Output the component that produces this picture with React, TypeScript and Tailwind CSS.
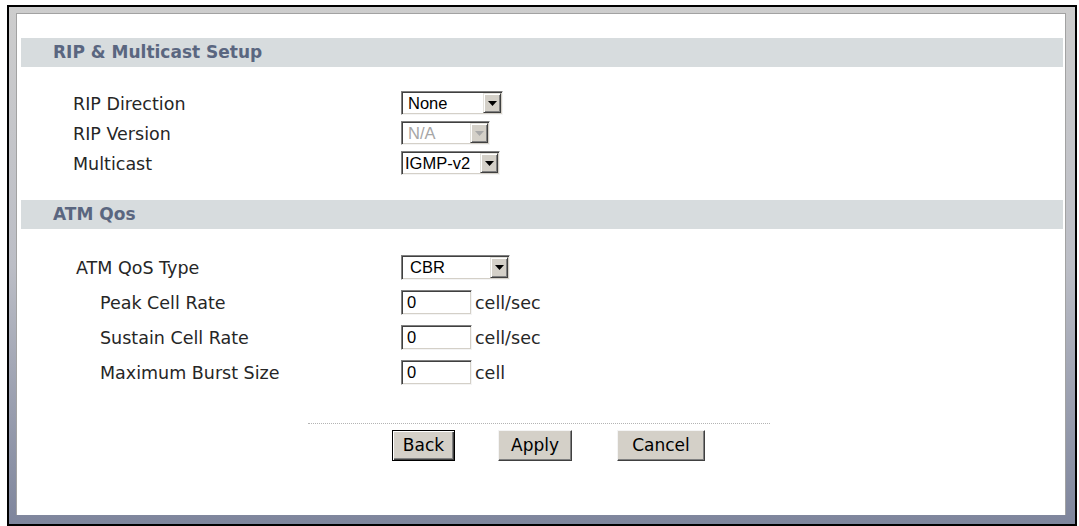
import React from "react";

const LABEL = "font-['DejaVu_Sans',Verdana,sans-serif] text-[17.5px] leading-none text-[#262626]";
const CTRL = "font-['Liberation_Sans',Arial,sans-serif] text-[16.5px] leading-none";

function Arrow({ disabled }: { disabled?: boolean }) {
  return (
    <div className="flex h-full w-[18px] items-center justify-center border border-t-[#e4e2dc] border-l-[#e4e2dc] border-b-[#404040] border-r-[#404040] bg-[#d4d0c8] shadow-[inset_1px_1px_0_#ffffff,inset_-1px_-1px_0_#808080]">
      <svg width="9" height="5" viewBox="0 0 9 5">
        <path d="M0 0H9L4.5 5Z" fill={disabled ? "#a8a8a8" : "#000"} />
      </svg>
    </div>
  );
}

function Select({ value, className, disabled, pad }: { value: string; className: string; disabled?: boolean; pad?: string }) {
  return (
    <div
      className={`flex items-stretch border border-t-[#808080] border-l-[#808080] border-b-[#f4f4f4] border-r-[#f4f4f4] bg-white p-[1px] shadow-[inset_1px_1px_0_#404040,inset_-1px_-1px_0_#d4d0c8] ${className}`}
    >
      <div className={`flex flex-1 items-center ${pad ?? "pl-[5px]"} ${CTRL} ${disabled ? "text-[#a6a6a6]" : "text-black"}`}>{value}</div>
      <Arrow disabled={disabled} />
    </div>
  );
}

function TextInput({ value }: { value: string }) {
  return (
    <div className={`flex h-[25px] w-[71px] items-center border border-t-[#808080] border-l-[#808080] border-b-[#f4f4f4] border-r-[#f4f4f4] bg-white pl-[5px] shadow-[inset_1px_1px_0_#404040,inset_-1px_-1px_0_#d4d0c8] ${CTRL} text-black`}>
      {value}
    </div>
  );
}

function Header({ title }: { title: string }) {
  return (
    <div className="flex h-[29px] items-center bg-[#d7dcde] pl-[32px]">
      <span className="font-['DejaVu_Sans',Verdana,sans-serif] text-[17px] font-bold leading-none text-[#5a6680]">{title}</span>
    </div>
  );
}

function Row({ label, h, indent, children }: { label: string; h: string; indent: string; children: React.ReactNode }) {
  return (
    <div className={`flex items-center ${h}`}>
      <div className={`w-[380px] pl-[52px] pt-[3px] ${LABEL}`}>
        <span className={indent}>{label}</span>
      </div>
      <div className="flex items-center">{children}</div>
    </div>
  );
}

function Btn({ label, className, primary }: { label: string; className: string; primary?: boolean }) {
  return (
    <div
      className={`flex h-[31px] items-center justify-center bg-[#d4d0c8] font-['DejaVu_Sans',Verdana,sans-serif] text-[17px] leading-none text-black ${
        primary
          ? "border border-black shadow-[inset_1px_1px_0_#ffffff,inset_-1px_-1px_0_#404040,inset_-2px_-2px_0_#808080]"
          : "border border-t-[#f4f4f4] border-l-[#f4f4f4] border-b-[#404040] border-r-[#404040] shadow-[inset_-1px_-1px_0_#808080]"
      } ${className}`}
    >
      {label}
    </div>
  );
}

export default function App() {
  return (
    <div className="flex h-[526px] w-[1079px] flex-col bg-white pl-[7px] pr-[2px] pt-[5px]">
      <div className="flex flex-1 flex-col border-2 border-black">
        <div className="flex flex-1 flex-col bg-gradient-to-b from-[#cdcdcd] via-[#bcbec6] to-[#7e859c] pb-[9px] pl-[7px] pr-[9px] pt-[6px]">
          <div className="flex flex-1 flex-col border-l border-t border-r border-[#a2a2a2] bg-white pl-[4px] pr-[2px] pt-[24px]">
            <Header title="RIP & Multicast Setup" />
            <div className="mt-[21px] flex flex-col">
              <Row label="RIP Direction" h="h-[30px]" indent="">
                <Select value="None" className="h-[24px] w-[102px]" />
              </Row>
              <Row label="RIP Version" h="h-[30px]" indent="">
                <Select value="N/A" className="h-[24px] w-[89px]" disabled />
              </Row>
              <Row label="Multicast" h="h-[30px]" indent="">
                <Select value="IGMP-v2" className="h-[24px] w-[99px]" pad="pl-[2px]" />
              </Row>
            </div>
            <div className="mt-[22px]">
              <Header title="ATM Qos" />
            </div>
            <div className="mt-[21px] flex flex-col">
              <Row label="ATM QoS Type" h="h-[35px]" indent="pl-[3px]">
                <Select value="CBR" className="h-[25px] w-[109px]" pad="pl-[7px]" />
              </Row>
              <Row label="Peak Cell Rate" h="h-[35px]" indent="pl-[27px]">
                <TextInput value="0" />
                <span className={`ml-[3px] pt-[3px] ${LABEL}`}>cell/sec</span>
              </Row>
              <Row label="Sustain Cell Rate" h="h-[35px]" indent="pl-[27px]">
                <TextInput value="0" />
                <span className={`ml-[3px] pt-[3px] ${LABEL}`}>cell/sec</span>
              </Row>
              <Row label="Maximum Burst Size" h="h-[35px]" indent="pl-[27px]">
                <TextInput value="0" />
                <span className={`ml-[3px] pt-[3px] ${LABEL}`}>cell</span>
              </Row>
            </div>
            <div className="ml-[287px] mt-[33px] w-[462px] border-t border-dotted border-[#b4b4b4]" />
            <div className="mt-[6px] flex pl-[371px]">
              <Btn label="Back" className="w-[63px]" primary />
              <Btn label="Apply" className="ml-[43px] w-[74px]" />
              <Btn label="Cancel" className="ml-[45px] w-[88px]" />
            </div>
          </div>
        </div>
      </div>
    </div>
  );
}
